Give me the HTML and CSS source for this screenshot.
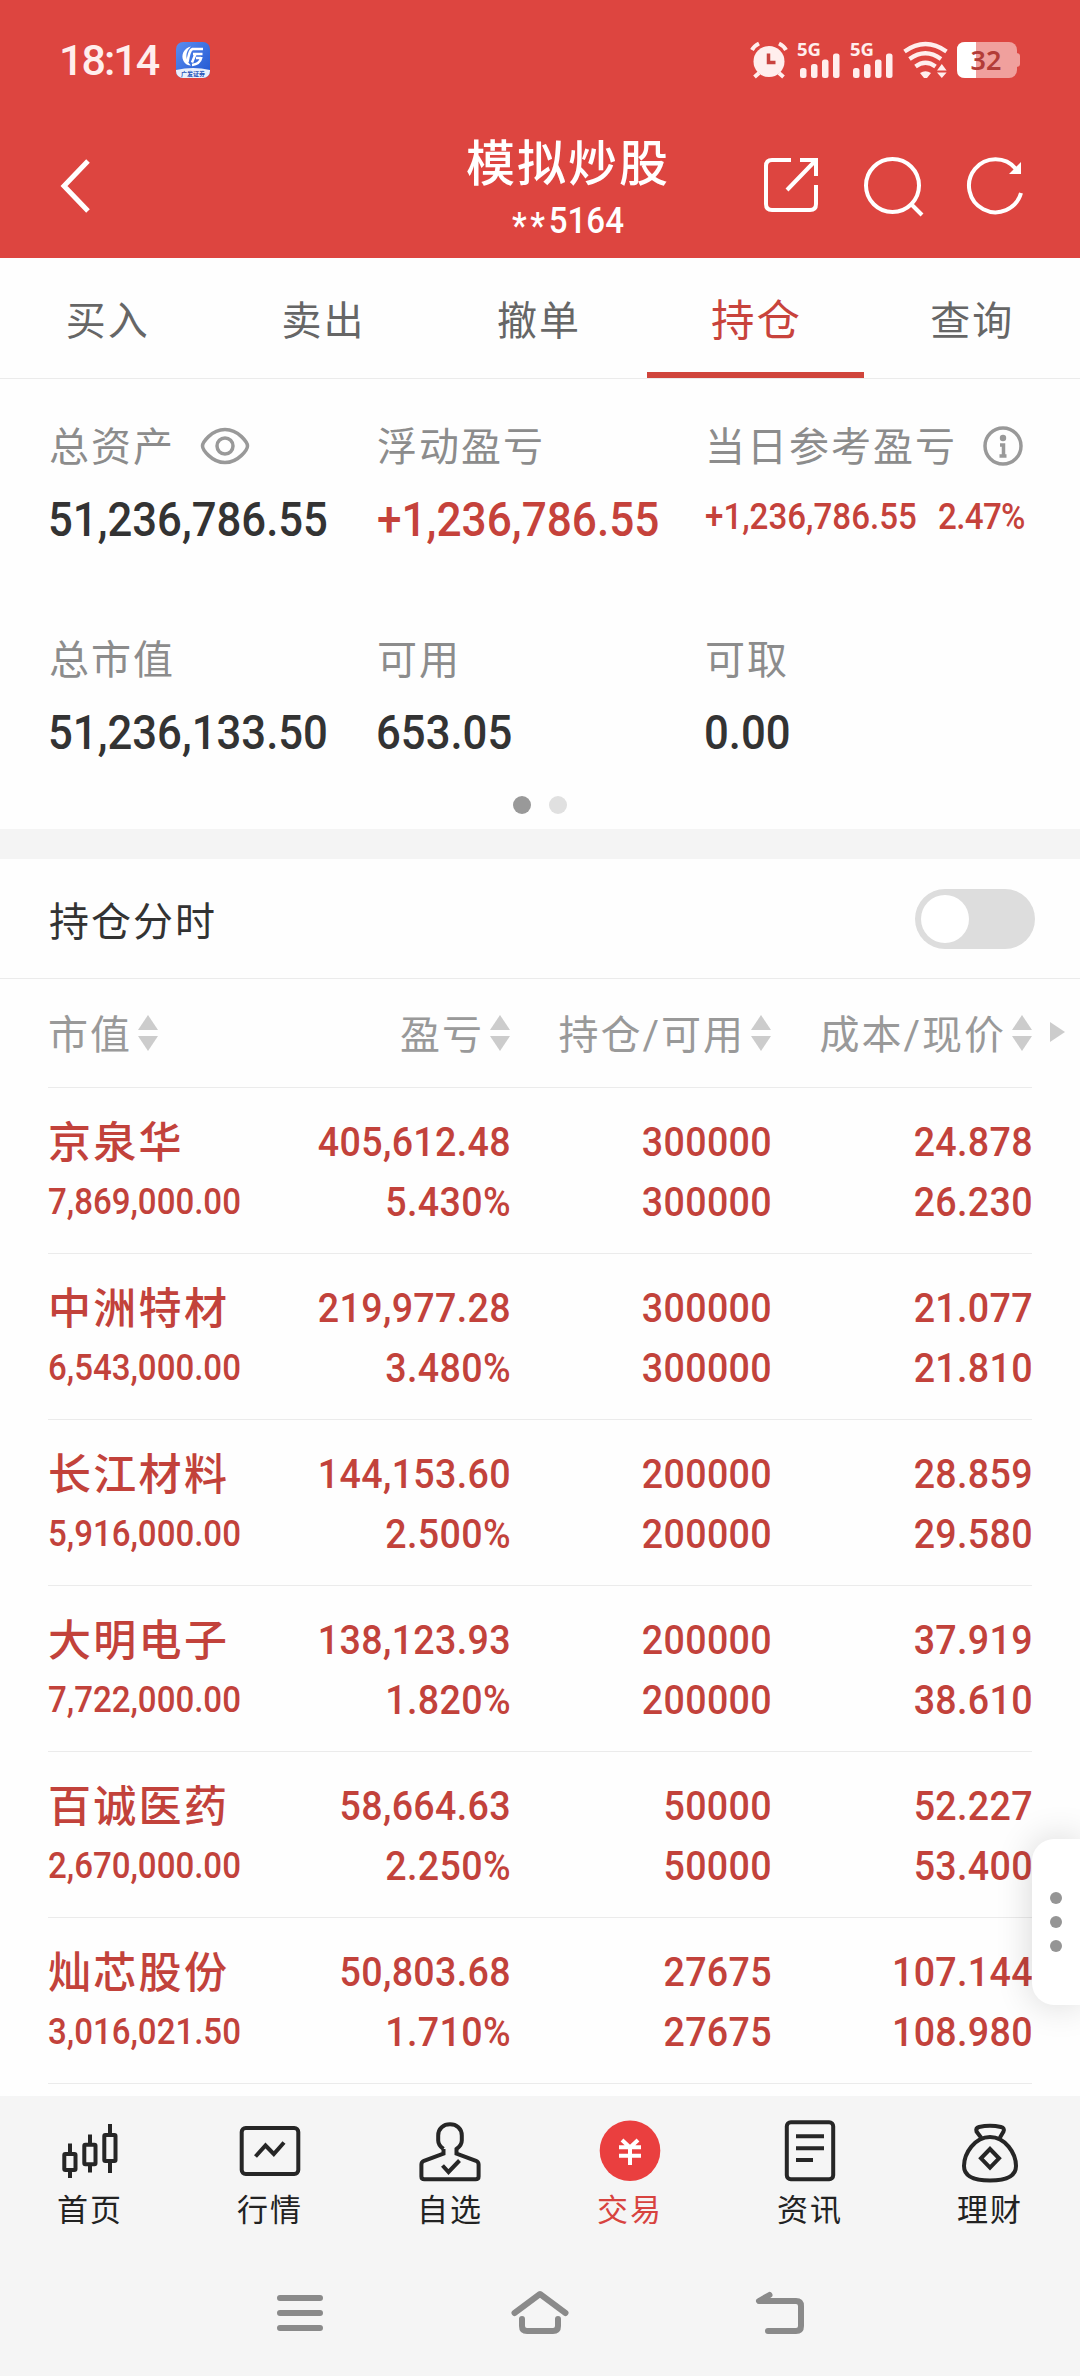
FILE: index.html
```html
<!DOCTYPE html>
<html lang="zh-CN">
<head>
    <meta charset="UTF-8">
    <meta name="viewport" content="width=device-width, initial-scale=1.0">
    <title>模拟炒股</title>
    <link rel="stylesheet" href="styles.css">
</head>
<body>
    <div class="top">
        <div class="status">
            <span class="time">18:14</span>
            <svg class="app" width="34" height="36" viewBox="0 0 34 36">
                <defs>
                    <linearGradient id="blue" x1="0" y1="0" x2="1" y2="1">
                        <stop offset="0" stop-color="#5a8df0"/>
                        <stop offset="1" stop-color="#1f55d0"/>
                    </linearGradient>
                    <clipPath id="round"><rect width="34" height="36" rx="7"/></clipPath>
                </defs>
                <g clip-path="url(#round)">
                    <rect width="34" height="36" fill="url(#blue)"/>
                    <path d="M0 28 Q17 24 34 28 V36 H0z" fill="#e9effc"/>
                </g>
                <path d="M15 4.500 C8 6 4.500 13 7.500 19 C9 22 12 23.500 15 23.500 C11 20 9 14 11.500 9 C12.500 7 14 5.500 15 4.500z" fill="#fff"/>
                <path d="M16 7 H27 M16.500 7 C13.500 8 12.500 14 11.500 20 M17 12 H26.500 M19.500 12 L16 20.500 M20 16 H25 M25.500 15 C24.500 19.500 21 22.500 16 23" fill="none" stroke="#fff" stroke-width="2.500"/>
                <text x="17" y="34" text-anchor="middle" class="app-name">广发证券</text>
            </svg>
            <div class="signs">
                <svg width="270" height="60" viewBox="750 30 270 60">
                    <g fill="#ffeeed" stroke="none">
                        <circle cx="769" cy="61.500" r="15.500"/>
                        <path d="M768.500 53.500 V62.500 H775.500" fill="none" stroke="#c9433f" stroke-width="3.500"/>
                        <path d="M752 50 Q754 46 759 43.500 M779 43.500 Q784 46 786 50 M759 73 L754.500 77 M779 73 L783.500 77" fill="none" stroke="#ffeeed" stroke-width="4"/>
                        <text x="797" y="56" class="net">5G</text>
                        <rect x="800" y="68" width="6.500" height="10" rx="2.500"/>
                        <rect x="811" y="64" width="6.500" height="14" rx="2.500"/>
                        <rect x="822" y="59.500" width="6.500" height="18.500" rx="2.500"/>
                        <rect x="833" y="53.500" width="6.500" height="24.500" rx="2.500"/>
                        <text x="850" y="56" class="net">5G</text>
                        <rect x="853" y="68" width="6.500" height="10" rx="2.500"/>
                        <rect x="864" y="64" width="6.500" height="14" rx="2.500"/>
                        <rect x="875" y="59.500" width="6.500" height="18.500" rx="2.500"/>
                        <rect x="886" y="53.500" width="6.500" height="24.500" rx="2.500"/>
                        <path d="M904.500 51.500 Q925.500 36.500 946.500 51.500 M909.500 59 Q925.500 47.500 941 59 M915.500 66.500 Q925.500 59 935.500 66.500" fill="none" stroke="#ffeeed" stroke-width="4.200"/>
                        <path d="M920 73 Q925.500 69.500 931 73 L927 78 H924z M937 70.500 L941.800 64 L946.600 70.500z M937 72.500 H946.600 L941.800 78z"/>
                    </g>
                    <rect x="957" y="42" width="60" height="36" rx="8" fill="#f0a09d"/>
                    <path d="M1016 53 Q1020 53 1020 56 V64 Q1020 67 1016 67z" fill="#f0a09d"/>
                    <path d="M976 42 H965 Q957 42 957 50 V70 Q957 78 965 78 H976z" fill="#fff"/>
                    <text x="986" y="70" text-anchor="middle" class="level">32</text>
                </svg>
            </div>
        </div>
        <div class="bar">
            <svg class="back" width="36" height="60" viewBox="0 0 36 60"><path d="M30 5 L6 30 L30 55"/></svg>
            <div class="title">
                <h1>模拟炒股</h1>
                <p><span class="star">**</span>5164</p>
            </div>
            <div class="tools">
                <svg width="60" height="60" viewBox="762 156 60 60"><path d="M792 161 H773 Q767 161 767 167 V205 Q767 211 773 211 H811 Q817 211 817 205 V186 M801 161 H817 V177 M817 161 L788 191"/></svg>
                <svg width="62" height="62" viewBox="862 154 62 62"><circle cx="892.500" cy="184.500" r="26.500"/><path d="M911 203 L922 214"/></svg>
                <svg width="62" height="62" viewBox="965 155 62 62"><path d="M1021 193 A26.500 26.500 0 1 1 1016 169"/><path d="M1021 162 V174 H1009z" class="solid"/></svg>
            </div>
        </div>
    </div>

    <ul class="tabs">
        <li>买入</li>
        <li>卖出</li>
        <li>撤单</li>
        <li class="active">持仓</li>
        <li>查询</li>
    </ul>

    <div class="assets">
        <div class="item">
            <div class="label">总资产
                <svg class="eye" width="50" height="38" viewBox="0 0 50 38"><path d="M2.500 19 C2.500 16 11 2.500 25 2.500 S47.500 16 47.500 19 S39 35.500 25 35.500 S2.500 22 2.500 19z"/><circle cx="25" cy="19" r="8"/></svg>
            </div>
            <div class="value">51,236,786.55</div>
        </div>
        <div class="item">
            <div class="label">浮动盈亏</div>
            <div class="value red">+1,236,786.55</div>
        </div>
        <div class="item">
            <div class="label">当日参考盈亏
                <svg class="info" width="40" height="40" viewBox="0 0 40 40"><circle cx="20" cy="20" r="18"/><circle cx="20" cy="12" r="3.200" class="dot"/><path d="M17 19 H20.500 V30 M16.500 30 H23.500"/></svg>
            </div>
            <div class="value red small"><span>+1,236,786.55</span><span class="rate">2.47%</span></div>
        </div>
        <div class="item">
            <div class="label">总市值</div>
            <div class="value">51,236,133.50</div>
        </div>
        <div class="item">
            <div class="label">可用</div>
            <div class="value">653.05</div>
        </div>
        <div class="item">
            <div class="label">可取</div>
            <div class="value">0.00</div>
        </div>
    </div>
    <div class="dots"><i class="on"></i><i></i></div>

    <div class="switch-row">
        <span>持仓分时</span>
        <div class="switch"><i></i></div>
    </div>

    <div class="list">
        <div class="row head">
            <div>市值<i class="sort"></i></div>
            <div>盈亏<i class="sort"></i></div>
            <div>持仓/可用<i class="sort"></i></div>
            <div>成本/现价<i class="sort"></i></div>
            <b class="more"></b>
        </div>
        <div class="row">
            <div><h3>京泉华</h3><p>7,869,000.00</p></div>
            <div class="num">405,612.48<br>5.430%</div>
            <div class="num">300000<br>300000</div>
            <div class="num">24.878<br>26.230</div>
        </div>
        <div class="row">
            <div><h3>中洲特材</h3><p>6,543,000.00</p></div>
            <div class="num">219,977.28<br>3.480%</div>
            <div class="num">300000<br>300000</div>
            <div class="num">21.077<br>21.810</div>
        </div>
        <div class="row">
            <div><h3>长江材料</h3><p>5,916,000.00</p></div>
            <div class="num">144,153.60<br>2.500%</div>
            <div class="num">200000<br>200000</div>
            <div class="num">28.859<br>29.580</div>
        </div>
        <div class="row">
            <div><h3>大明电子</h3><p>7,722,000.00</p></div>
            <div class="num">138,123.93<br>1.820%</div>
            <div class="num">200000<br>200000</div>
            <div class="num">37.919<br>38.610</div>
        </div>
        <div class="row">
            <div><h3>百诚医药</h3><p>2,670,000.00</p></div>
            <div class="num">58,664.63<br>2.250%</div>
            <div class="num">50000<br>50000</div>
            <div class="num">52.227<br>53.400</div>
        </div>
        <div class="row">
            <div><h3>灿芯股份</h3><p>3,016,021.50</p></div>
            <div class="num">50,803.68<br>1.710%</div>
            <div class="num">27675<br>27675</div>
            <div class="num">107.144<br>108.980</div>
        </div>
    </div>

    <div class="drawer"><i></i><i></i><i></i></div>

    <div class="footer">
        <ul class="menu">
            <li>
                <svg width="66" height="66" viewBox="0 0 66 66"><rect x="7.300" y="36" width="11.200" height="16" rx="1"/><rect x="27.300" y="26.700" width="11.200" height="19.600" rx="1"/><rect x="47.300" y="17" width="11.200" height="26" rx="1"/><path d="M13 25.500 V36 M13 52 V60 M33 16.500 V27 M33 46 V54.500 M53 6 V17 M53 43 V55"/></svg>
                <span>首页</span>
            </li>
            <li>
                <svg width="66" height="66" viewBox="0 0 66 66"><rect x="4.700" y="10" width="56.600" height="46" rx="4"/><path d="M18.500 38.500 L28.500 27.500 L36.800 36 L47 24.500"/></svg>
                <span>行情</span>
            </li>
            <li>
                <svg width="66" height="66" viewBox="0 0 66 66"><path d="M26.500 31 V35.500 L7 42.800 Q4.400 44 4.400 46.500 V58.500 Q4.400 61.300 7.400 61.300 H58.600 Q61.600 61.300 61.600 58.500 V46.500 Q61.600 44 59 42.800 L39.500 35.500 V31 C43 28.500 44.800 26 44.800 22.500 V17.500 C44.800 10.500 39.500 6.300 33 6.300 S21.200 10.500 21.200 17.500 V22.500 C21.200 26 23 28.500 26.500 31"/><path d="M25.500 47.500 L31.500 54 L42.500 42.500"/></svg>
                <span>自选</span>
            </li>
            <li class="active">
                <svg width="66" height="66" viewBox="0 0 66 66"><circle cx="33" cy="32.700" r="30.300"/><path d="M25 22 L33 29.500 L41 22 M22 29.300 H44 M22 37.700 H44 M33 29 V47"/></svg>
                <span>交易</span>
            </li>
            <li>
                <svg width="66" height="66" viewBox="0 0 66 66"><rect x="9.800" y="4.300" width="46.400" height="57" rx="4"/><path d="M19 18.300 H47 M19 30.300 H47 M19 42 H36"/></svg>
                <span>资讯</span>
            </li>
            <li>
                <svg width="66" height="66" viewBox="0 0 66 66"><path d="M24 19.500 L19.500 13.500 Q18.500 10 22 9 Q33 6.500 44 9 Q48 10 46.500 13.500 L43 19.500 M33 19 C18 19 7 35 7 48 C7 59 17 62.500 33 62.500 S59 59 59 48 C59 35 48 19 33 19z"/><path d="M33 31 L42 40.300 L33 49.600 L24 40.300z"/></svg>
                <span>理财</span>
            </li>
        </ul>
        <div class="keys">
            <svg width="60" height="60" viewBox="270 2283 60 60"><path d="M280 2298 H320 M280 2313 H320 M280 2328 H320"/></svg>
            <svg width="60" height="60" viewBox="510 2283 60 60"><path d="M514.500 2313 L540 2294 L565.500 2313 M522 2319 V2326 Q522 2331 527 2331 H553 Q558 2331 558 2326 V2319"/></svg>
            <svg width="60" height="60" viewBox="750 2283 60 60"><path d="M769.500 2295 L759 2301 H796 Q801 2301 801 2306 V2326 Q801 2331 796 2331 H768"/></svg>
        </div>
    </div>
</body>
</html>
```
FILE: styles.css
```css
*{
    padding: 0;
    margin: 0;
    box-sizing: border-box;
}
body{
    width: 1080px;
    height: 2376px;
    overflow: hidden;
    position: relative;
    display: flex;
    flex-direction: column;
    background: #fefefe;
    color: #333;
    font-family: Roboto, "Noto Sans CJK SC", sans-serif;
}
ul{
    list-style: none;
}
h1, h3{
    font-weight: 500;
}
svg{
    display: block;
    fill: none;
    flex: none;
}

/* header */
.top{
    height: 258px;
    background: #dd4540;
    color: #fff;
}
.status{
    height: 120px;
    padding: 0 60px 0 59px;
    display: flex;
    align-items: center;
}
.time{
    font-size: 43px;
    font-weight: 500;
    letter-spacing: -2px;
    color: #ffeeed;
}
.app{
    margin-left: 18px;
}
.app-name{
    font-size: 6px;
    font-weight: bold;
    fill: #2a55b8;
}
.signs{
    margin-left: auto;
}
.net{
    font-family: "Noto Sans", sans-serif;
    font-size: 18.500px;
    font-weight: bold;
}
.level{
    font-family: "Noto Sans", sans-serif;
    font-size: 27px;
    font-weight: 600;
    fill: #b33c37;
}
.bar{
    height: 138px;
    padding: 0 53px 0 57px;
    display: grid;
    grid-template-columns: 370px 1fr 318px;
}
.bar svg{
    stroke: #fff;
    stroke-width: 4;
}
.bar .back{
    margin: 36px 0 0 1px;
    stroke-width: 5;
}
.title{
    text-align: center;
}
.title h1{
    margin-top: 15px;
    font-size: 49px;
    line-height: 60px;
    letter-spacing: 2px;
}
.title p{
    font-size: 36px;
    line-height: 53px;
    font-weight: 500;
    transform: scaleX(.92);
}
.star{
    display: inline-block;
    vertical-align: -5px;
    line-height: 30px;
    letter-spacing: 4px;
}
.tools{
    display: flex;
    justify-content: flex-end;
    gap: 41px;
    padding-top: 35px;
}
.solid{
    fill: #fff;
    stroke: none;
}

/* tabs */
.tabs{
    height: 121px;
    display: flex;
    border-bottom: 1px solid #ebebeb;
}
.tabs li{
    flex: 1;
    height: 120px;
    line-height: 127px;
    text-align: center;
    font-size: 40px;
    letter-spacing: 2px;
    color: #666;
}
.tabs .active{
    padding-left: 2px;
    font-size: 43.500px;
    color: #c8433c;
    border-bottom: 6px solid #d0453c;
}

/* assets */
.assets{
    height: 407px;
    padding: 36px 0 0 49px;
    display: grid;
    grid-template-columns: 328px 328px 1fr;
    grid-template-rows: 213px 1fr;
}
.label{
    display: flex;
    align-items: center;
    height: 58px;
    font-size: 40px;
    letter-spacing: 2px;
    color: #8c8c8c;
}
.label svg{
    margin: 3px 0 0 26px;
    stroke: #999;
    stroke-width: 3.500;
}
.label .eye{
    margin-left: 25px;
}
.info .dot{
    fill: #999;
    stroke: none;
}
.value{
    margin: 7px 0 0 -1px;
    height: 80px;
    line-height: 80px;
    font-size: 48px;
    font-weight: 500;
    white-space: nowrap;
    transform: scaleX(.91);
    transform-origin: left;
}
.red{
    margin-left: 0;
    color: #c5423b;
    transform: scaleX(.92);
}
.small{
    display: flex;
    gap: 23px;
    font-size: 36px;
    line-height: 74px;
}
.rate{
    letter-spacing: -.700px;
}
.dots{
    height: 43px;
    padding-top: 10px;
    display: flex;
    justify-content: center;
    gap: 18px;
}
.dots i{
    width: 18px;
    height: 18px;
    border-radius: 50%;
    background: #e0e0e0;
}
.dots .on{
    background: #999;
}

.switch-row{
    height: 150px;
    padding: 0 45px 0 49px;
    display: flex;
    align-items: center;
    justify-content: space-between;
    border-top: 30px solid #f4f4f4;
    border-bottom: 1px solid #ebebeb;
    font-size: 40px;
    letter-spacing: 2px;
}
.switch{
    width: 120px;
    height: 60px;
    padding: 6px;
    border-radius: 30px;
    background: #ddd;
}
.switch i{
    display: block;
    width: 48px;
    height: 48px;
    border-radius: 50%;
    background: #fff;
}

/* holdings */
.list{
    flex: 1;
    padding: 0 48px;
}
.row{
    height: 166px;
    padding-top: 24px;
    display: grid;
    grid-template-columns: 222px 240px 261px 261px;
    border-bottom: 1px solid #ebebeb;
    font-size: 41.500px;
    line-height: 60px;
    font-weight: 500;
    text-align: right;
    color: #c2423b;
}
.row > div:first-child{
    text-align: left;
}
.row h3{
    padding-top: 1px;
    height: 60px;
    font-size: 43px;
    letter-spacing: 2.300px;
}
.row p{
    font-size: 36.500px;
    transform: scaleX(.905);
    transform-origin: left;
}
/* narrower digits */
.num{
    margin-right: -1px;
    letter-spacing: .400px;
    transform: scaleX(.905);
    transform-origin: right;
}
.head{
    position: relative;
    height: 109px;
    padding-top: 0;
    font-size: 40px;
    font-weight: normal;
    letter-spacing: 2px;
    color: #999;
}
.head div{
    display: flex;
    align-items: center;
    justify-content: flex-end;
    padding-top: 5px;
    white-space: nowrap;
}
.head div:first-child{
    justify-content: flex-start;
}
.sort{
    margin: 0 0 5px 6px;
    display: flex;
    flex-direction: column;
    gap: 6px;
}
.sort::before, .sort::after{
    content: "";
    border: 10.500px solid transparent;
    border-top: 0;
    border-bottom: 15px solid #ccc;
}
.sort::after{
    border-bottom: 0;
    border-top: 15px solid #ccc;
}
.more{
    position: absolute;
    right: -33px;
    top: 43px;
    border: 10.500px solid transparent;
    border-right: 0;
    border-left: 15px solid #ccc;
}

/* floating handle at the right edge */
.drawer{
    position: absolute;
    right: 0;
    top: 1839px;
    width: 48px;
    height: 166px;
    display: flex;
    flex-direction: column;
    align-items: center;
    justify-content: center;
    gap: 12px;
    border-radius: 22px 0 0 22px;
    background: #fff;
    box-shadow: 0 0 36px rgba(0, 0, 0, .16);
}
.drawer i{
    width: 12px;
    height: 12px;
    border-radius: 50%;
    background: #959595;
}

/* footer */
.footer{
    height: 280px;
    background: #f5f5f5;
}
.menu{
    display: flex;
    height: 187px;
    padding-top: 22px;
}
.menu li{
    flex: 1;
    display: flex;
    flex-direction: column;
    align-items: center;
    color: #222;
}
.menu svg{
    stroke: #262626;
    stroke-width: 4;
}
.menu span{
    margin-top: 4px;
    font-size: 31px;
    line-height: 46px;
    letter-spacing: 2px;
}
.menu .active{
    color: #d8433f;
}
.menu .active svg{
    stroke: #fff;
}
.menu .active circle{
    fill: #ea3f3f;
    stroke: none;
}
.keys{
    display: flex;
    justify-content: center;
    gap: 180px;
}
.keys svg{
    stroke: #8a8a8a;
    stroke-width: 6;
    stroke-linecap: round;
    stroke-linejoin: round;
}
```
